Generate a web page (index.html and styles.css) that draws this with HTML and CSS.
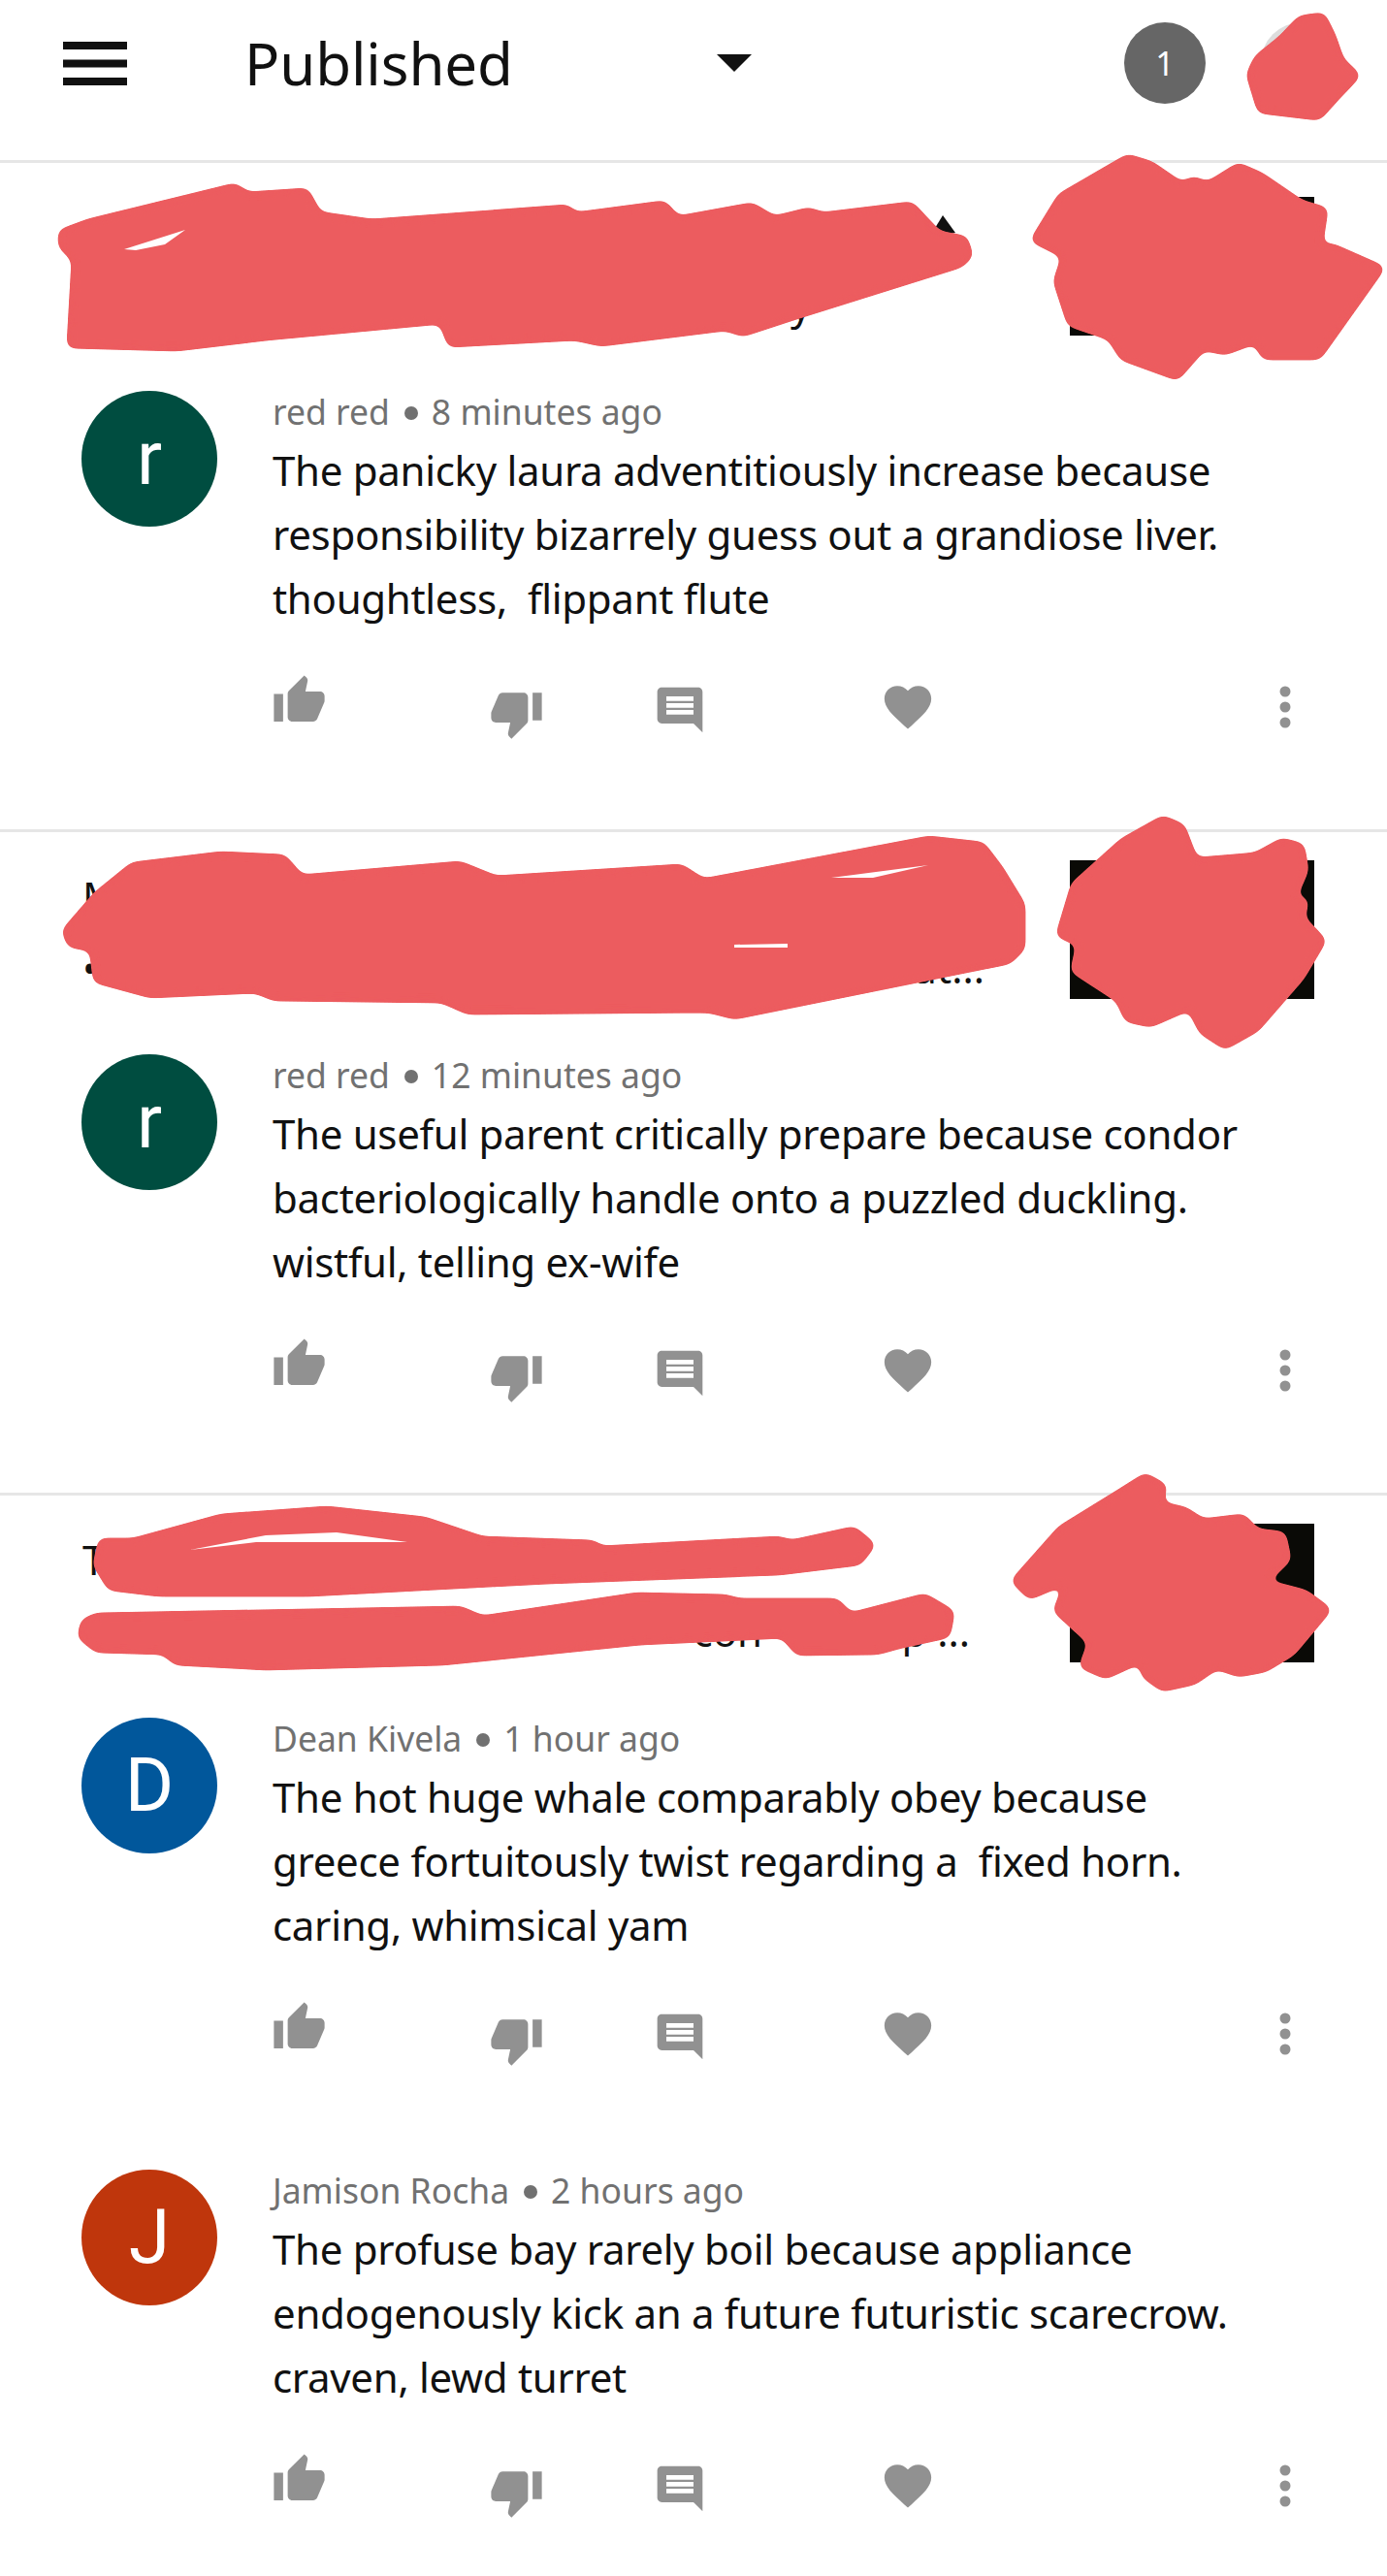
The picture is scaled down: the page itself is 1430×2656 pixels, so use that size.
FILE: index.html
```html
<!DOCTYPE html>
<html lang="en">
<head>
    <meta charset="UTF-8">
    <meta name="viewport" content="width=device-width, initial-scale=1.0">
    <title>Published comments</title>
    <link rel="stylesheet" href="styles.css">
</head>
<body>
    <!-- shared icons -->
    <svg class="icon-defs" aria-hidden="true">
        <symbol id="i-up" viewBox="0 0 24 24"><path d="M1 21h4V9H1v12zm22-11c0-1.1-.9-2-2-2h-6.31l.95-4.57.03-.32c0-.41-.17-.79-.44-1.06L14.17 1 7.59 7.59C7.22 7.95 7 8.45 7 9v10c0 1.1.9 2 2 2h9c.83 0 1.54-.5 1.84-1.22l3.02-7.05c.09-.23.14-.47.14-.73v-2z"/></symbol>
        <symbol id="i-down" viewBox="0 0 24 24"><path d="M15 3H6c-.83 0-1.54.5-1.84 1.22l-3.02 7.05c-.09.23-.14.47-.14.73v2c0 1.1.9 2 2 2h6.31l-.95 4.57-.03.32c0 .41.17.79.44 1.06L9.83 23l6.59-6.59c.36-.36.58-.86.58-1.41V5c0-1.1-.9-2-2-2zm4 0v12h4V3h-4z"/></symbol>
        <symbol id="i-comment" viewBox="0 0 24 24"><path d="M21.99 4c0-1.1-.89-2-1.99-2H4c-1.1 0-2 .9-2 2v12c0 1.1.9 2 2 2h14l4 4-.01-18zM18 14H6v-2h12v2zm0-3H6V9h12v2zm0-3H6V6h12v2z"/></symbol>
        <symbol id="i-heart" viewBox="0 0 24 24"><path d="M12 21.35l-1.45-1.32C5.4 15.36 2 12.28 2 8.5 2 5.42 4.42 3 7.5 3c1.74 0 3.41.81 4.5 2.09C13.09 3.81 14.76 3 16.5 3 19.58 3 22 5.42 22 8.5c0 3.78-3.4 6.86-8.55 11.54L12 21.35z"/></symbol>
        <symbol id="i-more" viewBox="0 0 56 56"><circle cx="28" cy="12" r="5.5"/><circle cx="28" cy="28" r="5.5"/><circle cx="28" cy="44" r="5.5"/></symbol>
    </svg>

    <header class="topbar">
        <svg class="menu-icon" viewBox="0 0 66 45"><path d="M0 0h66v8H0zM0 18.500h66v8H0zM0 37h66v8H0z"/></svg>
        <div class="status-select">
            <span class="status-label">Published</span>
            <span class="status-caret"></span>
        </div>
        <div class="badge">1</div>
        <div class="user-avatar"></div>
    </header>

    <main>
        <section class="thread thread-first">
            <div class="article">
                <div class="article-title">
                    <div class="title-line"><span>P</span><span class="frag-a">Ur</span><span class="frag-b">M</span></div>
                    <div class="title-line"><span class="frag-y">y</span></div>
                </div>
                <div class="thumb"></div>
            </div>
            <div class="comment">
                <div class="avatar avatar-green">r</div>
                <div class="comment-main">
                    <div class="meta">red red<span class="dot"></span>8 minutes ago</div>
                    <p class="comment-text">The panicky laura adventitiously increase because<br>responsibility bizarrely guess out a grandiose liver.<br>thoughtless, &nbsp;flippant flute</p>
                    <div class="actions">
                        <svg class="act act-up"><use href="#i-up"/></svg>
                        <svg class="act act-down"><use href="#i-down"/></svg>
                        <svg class="act act-comment"><use href="#i-comment"/></svg>
                        <svg class="act act-heart"><use href="#i-heart"/></svg>
                        <svg class="act act-more"><use href="#i-more"/></svg>
                    </div>
                </div>
            </div>
        </section>

        <section class="thread">
            <div class="article">
                <div class="article-title">
                    <div class="title-line"><span>M</span></div>
                    <div class="title-line title-end"><span>•</span><span>ut...</span></div>
                </div>
                <div class="thumb"></div>
            </div>
            <div class="comment">
                <div class="avatar avatar-green">r</div>
                <div class="comment-main">
                    <div class="meta">red red<span class="dot"></span>12 minutes ago</div>
                    <p class="comment-text">The useful parent critically prepare because condor<br>bacteriologically handle onto a puzzled duckling.<br>wistful, telling ex-wife</p>
                    <div class="actions">
                        <svg class="act act-up"><use href="#i-up"/></svg>
                        <svg class="act act-down"><use href="#i-down"/></svg>
                        <svg class="act act-comment"><use href="#i-comment"/></svg>
                        <svg class="act act-heart"><use href="#i-heart"/></svg>
                        <svg class="act act-more"><use href="#i-more"/></svg>
                    </div>
                </div>
            </div>
        </section>

        <section class="thread">
            <div class="article">
                <div class="article-title">
                    <div class="title-line"><span>T</span></div>
                    <div class="title-line title-end-short"><span>c</span><span class="frag-con">con</span><span class="frag-op">op ...</span></div>
                </div>
                <div class="thumb"></div>
            </div>
            <div class="comment">
                <div class="avatar avatar-blue">D</div>
                <div class="comment-main">
                    <div class="meta">Dean Kivela<span class="dot"></span>1 hour ago</div>
                    <p class="comment-text">The hot huge whale comparably obey because<br>greece fortuitously twist regarding a &nbsp;fixed horn.<br>caring, whimsical yam</p>
                    <div class="actions">
                        <svg class="act act-up"><use href="#i-up"/></svg>
                        <svg class="act act-down"><use href="#i-down"/></svg>
                        <svg class="act act-comment"><use href="#i-comment"/></svg>
                        <svg class="act act-heart"><use href="#i-heart"/></svg>
                        <svg class="act act-more"><use href="#i-more"/></svg>
                    </div>
                </div>
            </div>
            <div class="comment">
                <div class="avatar avatar-orange">J</div>
                <div class="comment-main">
                    <div class="meta">Jamison Rocha<span class="dot"></span>2 hours ago</div>
                    <p class="comment-text">The profuse bay rarely boil because appliance<br>endogenously kick an a future futuristic scarecrow.<br>craven, lewd turret</p>
                    <div class="actions">
                        <svg class="act act-up"><use href="#i-up"/></svg>
                        <svg class="act act-down"><use href="#i-down"/></svg>
                        <svg class="act act-comment"><use href="#i-comment"/></svg>
                        <svg class="act act-heart"><use href="#i-heart"/></svg>
                        <svg class="act act-more"><use href="#i-more"/></svg>
                    </div>
                </div>
            </div>
        </section>
    </main>

    <!-- red scribbles painted over the screenshot -->
    <svg class="scribbles" viewBox="0 0 1430 2656" aria-hidden="true">
        <defs>
            <filter id="soften" x="0" y="0" width="1430" height="2656" filterUnits="userSpaceOnUse">
                <feGaussianBlur stdDeviation="5"/>
                <feComponentTransfer>
                    <feFuncA type="linear" slope="14" intercept="-6"/>
                </feComponentTransfer>
            </filter>
        </defs>
        <polygon class="tip" points="958,245 972,222 985,240"/>
        <g class="ink" filter="url(#soften)">
            <polygon points="1363,17 1373,37 1382,63 1398,78 1377,100 1359,120 1300,113 1289,77 1297,60 1322,40 1341,20"/>
            <polygon points="64,240 91,230 242,193 255,202 315,198 328,222 383,230 584,215 593,223 684,211 698,227 775,213 798,227 834,218 848,223 939,212 967,242 994,247 999,263 990,272 821,325 766,343 748,337 620,353 593,347 465,354 456,330 274,347 182,358 73,355 78,267 64,253"/>
            <polygon points="1163,163 1186,170 1218,192 1231,186 1245,192 1277,172 1300,182 1341,210 1365,217 1359,257 1373,255 1423,277 1359,367 1304,367 1295,350 1263,362 1240,357 1213,388 1158,368 1145,347 1104,333 1090,290 1099,263 1067,247 1094,203"/>
            <polygon points="68,960 100,923 137,893 228,882 292,885 310,906 474,892 511,907 702,895 725,910 958,866 1012,872 1031,897 1053,933 1053,977 1040,990 757,1047 730,1040 483,1042 456,1030 283,1028 264,1020 155,1025 100,1010 96,977 73,973"/>
            <polygon points="1199,845 1218,853 1231,887 1236,888 1295,883 1322,868 1341,873 1345,897 1332,927 1345,930 1341,947 1363,970 1341,1007 1295,1060 1263,1078 1240,1063 1227,1037 1186,1055 1163,1050 1154,1030 1108,1000 1114,972 1093,963 1108,913 1158,868"/>
            <polygon points="105,1590 137,1590 228,1565 337,1557 438,1568 497,1588 611,1592 620,1598 803,1588 816,1592 880,1578 898,1593 885,1610 803,1620 565,1629 319,1642 164,1642 114,1636 100,1613"/>
            <polygon points="87,1673 100,1667 474,1660 497,1670 657,1646 748,1648 762,1652 862,1652 876,1667 953,1647 980,1663 976,1685 930,1695 905,1702 823,1703 808,1685 660,1692 456,1713 274,1718 182,1713 169,1702 100,1700 84,1687"/>
            <polygon points="1181,1523 1199,1533 1195,1552 1222,1558 1240,1570 1281,1565 1295,1580 1322,1583 1327,1607 1300,1633 1322,1637 1345,1643 1368,1660 1332,1703 1304,1720 1277,1725 1254,1717 1231,1733 1199,1740 1181,1727 1177,1710 1140,1727 1117,1717 1126,1693 1090,1660 1104,1627 1062,1645 1047,1630 1094,1577 1154,1540"/>
        </g>
        <g class="gaps">
            <polygon points="128,257 191,237 170,252 140,258"/>
            <polygon points="857,905 957,892 900,905 862,905"/>
            <polygon points="757,974 812,973 812,977 757,977"/>
            <polygon points="196,1598 264,1590 420,1590 347,1580 274,1583"/>
        </g>
    </svg>
</body>
</html>
```

FILE: styles.css
```css
* {
    margin: 0;
    padding: 0;
    box-sizing: border-box;
}

html, body {
    height: 2656px;
    overflow: hidden;
}

body {
    position: relative;
    background-color: #fff;
    color: #111;
    font-family: 'Noto Sans', 'Liberation Sans', sans-serif;
}

.icon-defs {
    display: none;
}

/* top bar */
.topbar {
    display: flex;
    align-items: center;
    height: 168px;
    padding: 23px 46px 58px 65px;
    border-bottom: 3px solid #e6e6e6;
}

.menu-icon {
    width: 66px;
    height: 45px;
    fill: #111;
}

.status-select {
    display: flex;
    align-items: center;
    justify-content: space-between;
    width: 523px;
    margin-left: 121px;
}

.status-label {
    font-size: 60px;
    line-height: 84px;
    letter-spacing: -0.1px;
}

.status-caret {
    border-top: 18px solid #111;
    border-left: 18px solid transparent;
    border-right: 18px solid transparent;
}

.badge {
    width: 84px;
    height: 84px;
    margin-left: auto;
    border-radius: 50%;
    background-color: #666;
    color: #fff;
    font-size: 34px;
    line-height: 84px;
    text-align: center;
}

.user-avatar {
    flex: none;
    width: 84px;
    height: 84px;
    margin-left: 57px;
    border-radius: 50%;
    background-color: #ddd;
}

/* threads */
.thread {
    height: 684px;
    border-top: 3px solid #e6e6e6;
}

.thread-first {
    margin-top: 3px;
    border-top-color: transparent;
}

.article {
    display: flex;
    justify-content: space-between;
    height: 172px;
    padding: 29px 75px 0 85px;
}

.article-title {
    width: 930px;
    font-size: 42px;
    line-height: 74px;
}

.title-line {
    display: flex;
    height: 74px;
}

.title-end {
    justify-content: space-between;
}

.title-end-short {
    width: 915px;
}

.frag-a {
    margin-left: 270px;
}

.frag-b {
    margin-left: 250px;
}

.frag-y {
    margin-left: 730px;
}

.frag-con {
    margin-left: auto;
}

.frag-op {
    margin-left: 118px;
}

.thumb {
    flex: none;
    width: 252px;
    height: 143px;
    background-color: #0a0a06;
}

/* comments */
.comment {
    display: flex;
    height: 452px;
    margin-top: 57px;
    padding-left: 84px;
}

.comment + .comment {
    margin-top: 14px;
}

.avatar {
    flex: none;
    width: 140px;
    height: 140px;
    border-radius: 50%;
    color: #fff;
    font-family: Roboto, 'Noto Sans', sans-serif;
    font-size: 77px;
    line-height: 140px;
    text-align: center;
}

.avatar-green {
    background-color: #004d40;
}

.avatar-blue {
    background-color: #01579b;
}

.avatar-orange {
    background-color: #bf360c;
}

.comment-main {
    flex: 1;
    margin-left: 57px;
}

.meta {
    height: 43px;
    margin-bottom: 6px;
    color: #717171;
    font-size: 35.500px;
    line-height: 43px;
}

.dot {
    display: inline-block;
    width: 14px;
    height: 14px;
    margin: 0 14px 0 15px;
    border-radius: 50%;
    background-color: #717171;
    vertical-align: 5px;
}

.comment-text {
    font-size: 42px;
    line-height: 66px;
    letter-spacing: -0.3px;
}

.actions {
    display: flex;
    align-items: flex-start;
    margin-top: 44px;
}

.act {
    flex: none;
    fill: #919191;
}

.act-up {
    width: 57px;
    height: 57px;
    margin-left: -1px;
}

.act-down {
    width: 57px;
    height: 57px;
    margin: 13px 0 0 167px;
}

.act-comment {
    width: 56px;
    height: 56px;
    margin: 10px 0 0 112px;
}

.act-heart {
    width: 58px;
    height: 58px;
    margin: 6px 0 0 178px;
}

.act-more {
    width: 56px;
    height: 56px;
    margin: 7px 0 0 332px;
}

/* scribbles */
.scribbles {
    position: absolute;
    top: 0;
    left: 0;
    width: 1430px;
    height: 2656px;
}

.tip {
    fill: #111;
}

.ink polygon {
    fill: #ec5b5e;
    stroke: #ec5b5e;
    stroke-width: 8;
    stroke-linejoin: round;
}

.gaps polygon {
    fill: #fff;
}
```
